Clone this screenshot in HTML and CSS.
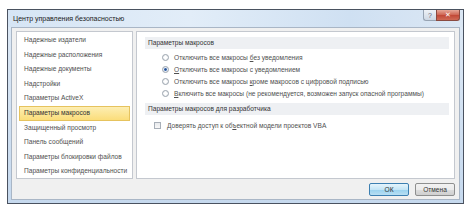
FILE: index.html
```html
<!DOCTYPE html>
<html lang="ru">
<head>
<meta charset="utf-8">
<link rel="stylesheet" href="styles.css">
</head>
<body>
<div class="window">
  <div class="titlebar">
    <span class="title">Центр управления безопасностью</span>
    <div class="caption-btns">
      <span class="btn-help">?</span>
      <span class="btn-close">✕</span>
    </div>
  </div>
  <div class="client">
    <div class="panes">
      <ul class="nav">
        <li>Надежные издатели</li>
        <li>Надежные расположения</li>
        <li>Надежные документы</li>
        <li>Надстройки</li>
        <li>Параметры ActiveX</li>
        <li class="active">Параметры макросов</li>
        <li>Защищенный просмотр</li>
        <li>Панель сообщений</li>
        <li>Параметры блокировки файлов</li>
        <li>Параметры конфиденциальности</li>
      </ul>
      <div class="content">
        <div class="section-head">Параметры макросов</div>
        <div class="options">
          <div class="opt"><span class="radio"></span><span>Отключить все макросы <u>б</u>ез уведомления</span></div>
          <div class="opt"><span class="radio checked"></span><span><u>О</u>тключить все макросы с уведомлением</span></div>
          <div class="opt"><span class="radio"></span><span>Отключить все макросы <u>к</u>роме макросов с цифровой подписью</span></div>
          <div class="opt"><span class="radio"></span><span><u>В</u>ключить все макросы (не рекомендуется, возможен запуск опасной программы)</span></div>
        </div>
        <div class="section-head">Параметры макросов для разработчика</div>
        <div class="opt check-row"><span class="checkbox"></span><span>Доверять доступ к об<u>ъ</u>ектной модели проектов VBA</span></div>
      </div>
    </div>
    <div class="footer">
      <button class="btn btn-default">ОК</button>
      <button class="btn">Отмена</button>
    </div>
  </div>
</div>
</body>
</html>
```
FILE: styles.css
```css
* { box-sizing: border-box; }
html, body { margin: 0; padding: 0; background: #ffffff; }
body {
  font-family: "Liberation Sans", "DejaVu Sans", sans-serif;
  font-size: 6.6px;
  color: #444;
}
.window {
  margin: 9px 0 0 7px;
  width: 457px;
  height: 195px;
  border: 1px solid #4a5260;
  background: linear-gradient(180deg, #dfeaf6 0%, #c6d9ee 100%);
  display: flex;
  flex-direction: column;
  padding: 0 3px 3px 3px;
}
.titlebar {
  height: 17px;
  display: flex;
  align-items: center;
  justify-content: space-between;
  background: linear-gradient(90deg, #d6e5f5 0%, #e2edf8 40%, #cfe0f2 75%, #dbe7f4 100%);
  margin: 0 -3px;
  padding: 0 3px 0 5px;
}
.title { font-size: 7px; color: #222; }
.caption-btns { display: flex; align-self: flex-start; }
.btn-help {
  width: 13px; height: 11px;
  background: linear-gradient(180deg, #eef2f7, #cdd7e3);
  border: 1px solid #97a3b2;
  border-top: none;
  border-right: none;
  border-radius: 0 0 0 3px;
  font-size: 7px; color: #667;
  display: flex; align-items: center; justify-content: center;
}
.btn-close {
  width: 24px; height: 11px;
  background: linear-gradient(180deg, #e6a898 0%, #d06a58 45%, #c24a38 55%, #cf6a55 100%);
  border: 1px solid #8a4a40;
  border-top: none;
  border-radius: 0 0 3px 0;
  color: #fff; font-size: 7px; font-weight: bold;
  display: flex; align-items: center; justify-content: center;
}
.client {
  flex: 1;
  background: #f0f0f0;
  border: 1px solid #a9b6c6;
  padding: 3px 4px 3px 4px;
  display: flex;
  flex-direction: column;
}
.panes {
  display: flex;
  gap: 3px;
  height: 148px;
}
.nav {
  list-style: none;
  margin: 0;
  width: 117px;
  background: #fff;
  border: 1px solid #c4c8cf;
  padding: 1px 2px 3px 2px;
  display: flex;
  flex-direction: column;
}
.nav li {
  height: 14.6px;
  line-height: 14.6px;
  padding-left: 5px;
  color: #505050;
}
.nav li.active {
  background: linear-gradient(180deg, #fdeeb3 0%, #fbdd7a 100%);
  border: 1px solid #e6c35e;
  line-height: 12.6px;
  padding-left: 4px;
  color: #333;
}
.content {
  flex: 1;
  background: #fff;
  border: 1px solid #c4c8cf;
  padding: 5px 5px 0 8px;
}
.section-head {
  background: #eef0f3;
  height: 12px;
  line-height: 12px;
  padding-left: 3px;
  color: #333;
}
.options {
  padding: 3px 0 4px 17px;
}
.opt {
  display: flex;
  align-items: center;
  height: 11.8px;
  gap: 5px;
  color: #505050;
}
.radio {
  width: 7px; height: 7px;
  border-radius: 50%;
  border: 1px solid #9aa3ad;
  background: radial-gradient(circle, #ffffff 30%, #e4e8ec 100%);
  flex: none;
}
.radio.checked {
  background: radial-gradient(circle, #2d4f86 0%, #3b6cb5 35%, #e8ecf2 45%);
}
.check-row {
  padding-left: 9px;
  margin-top: 4px;
  gap: 6px;
}
.checkbox {
  width: 7px; height: 7px;
  border: 1px solid #a8afb8;
  background: linear-gradient(180deg, #e8eaed, #f8f8f8);
  flex: none;
}
.footer {
  flex: 1;
  display: flex;
  justify-content: flex-end;
  align-items: flex-end;
  gap: 6px;
  padding-right: 0;
}
.btn {
  font-family: inherit;
  font-size: 6.6px;
  width: 40px;
  height: 13px;
  padding: 0;
  color: #333;
  border: 1px solid #8e8f8f;
  border-radius: 2px;
  background: linear-gradient(180deg, #f2f2f2 0%, #ebebeb 50%, #dddddd 51%, #cfcfcf 100%);
}
.btn-default {
  border-color: #3c7fb1;
  background: linear-gradient(180deg, #e5f4fc 0%, #c4e5f6 50%, #98d1ef 51%, #b8dff3 100%);
}
```
